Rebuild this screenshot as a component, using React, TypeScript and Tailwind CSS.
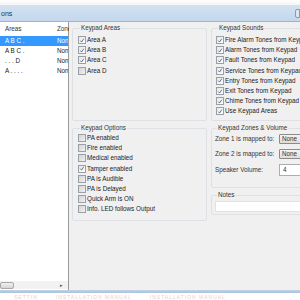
const Check = () => (
    <svg viewBox="0 0 7 7" className="w-[7px] h-[7px]">
        <path d="M1.5 3.6 L3 5.3 L5.6 1.4" fill="none" stroke="#3c4f78" strokeWidth="0.9" />
    </svg>
);

const Box = ({ checked }: { checked: boolean }) => (
    <div
        className={
            'w-[8px] h-[8px] shrink-0 border border-[#9aa0a6] flex items-center justify-center ' +
            (checked ? 'bg-gradient-to-br from-[#e6e6e6] to-white' : 'bg-gradient-to-br from-[#d4d4d4] to-[#f0f0f0]')
        }
    >
        {checked && <Check />}
    </div>
);

const Row = ({ label, checked = false }: { label: string; checked?: boolean }) => (
    <div className="h-[10.2px] flex items-center gap-[1px] whitespace-nowrap">
        <Box checked={checked} />
        <span className="text-[#222]">{label}</span>
    </div>
);

const Group = ({ title, children, className = '' }: { title: string; children: React.ReactNode; className?: string }) => (
    <fieldset className={'border border-[#dde1e5] rounded-[2px] ' + className}>
        <legend className="ml-[2px] px-[1px] leading-[8px] text-[#333]">{title}</legend>
        {children}
    </fieldset>
);

const areas = [
    { name: 'A B C .', sel: true },
    { name: 'A B C .', sel: false },
    { name: '. . . D', sel: false },
    { name: 'A . . . .', sel: false },
];

export default function App() {
    return (
        <div className="w-[300px] h-[300px] overflow-hidden bg-white flex flex-col font-['Liberation_Sans',Arial,sans-serif] text-[6.3px] leading-none">
            {/* faint strip above the window */}
            <div className="h-[5px] bg-gradient-to-b from-white to-[#f4f4f4]" />

            {/* title bar */}
            <div className="h-[16px] bg-gradient-to-b from-[#d3e2f2] to-[#c4d7ec] flex items-center justify-between pl-[1px]">
                <span className="text-[7px] text-[#1e3250]">ons</span>
                <div className="w-[5px] h-[9px] rounded-l-[2px] border border-[#8a9bb0] bg-[#dde6f0]" />
            </div>

            {/* body */}
            <div className="flex-1 flex min-h-0 border-t border-[#9fb4cc]">
                {/* list */}
                <div className="w-[69px] bg-white border-r border-[#9a9a9a] flex flex-col">
                    <div className="h-[14px] grid grid-cols-[57px_1fr] items-center pl-[5px] text-[#333]">
                        <span>Areas</span>
                        <span className="-ml-[5px]">Zone</span>
                    </div>
                    {areas.map((a, i) => (
                        <div
                            key={i}
                            className={
                                'h-[10px] grid grid-cols-[57px_1fr] items-center pl-[5px] whitespace-nowrap overflow-hidden ' +
                                (a.sel ? 'bg-[#3399ff] text-white' : 'text-[#222]')
                            }
                        >
                            <span>{a.name}</span>
                            <span className="-ml-[5px]">None</span>
                        </div>
                    ))}
                    <div className="flex-1" />
                    <div className="h-[8px] mb-[1px] bg-[#f2f2f2] flex items-center justify-between">
                        <div className="w-[14px] h-[7px] rounded-[2px] border border-[#a8a8a8] bg-gradient-to-b from-[#f0f0f0] to-[#d6d6d6]" />
                        <span className="text-[5px] text-[#555] pr-[5px]">▸</span>
                    </div>
                </div>

                {/* settings */}
                <div className="flex-1 bg-[#f0f0f0] pl-[3px] pt-[2px] overflow-hidden">
                    <div className="grid grid-cols-[135px_100px] gap-x-[4px]">
                        <div className="flex flex-col gap-[3px]">
                            <Group title="Keypad Areas" className="h-[97px] pl-[5px] pt-[3px]">
                                <Row label="Area A" checked />
                                <Row label="Area B" checked />
                                <Row label="Area C" checked />
                                <Row label="Area D" />
                            </Group>
                            <Group title="Keypad Options" className="h-[97px] pl-[5px] pt-[1px]">
                                <Row label="PA enabled" />
                                <Row label="Fire enabled" />
                                <Row label="Medical enabled" />
                                <Row label="Tamper enabled" checked />
                                <Row label="PA is Audible" />
                                <Row label="PA is Delayed" />
                                <Row label="Quick Arm is ON" />
                                <Row label="Info. LED follows Output" />
                            </Group>
                        </div>

                        <div className="flex flex-col gap-[3px]">
                            <Group title="Keypad Sounds" className="h-[97px] pl-[4px] pt-[3px]">
                                <Row label="Fire Alarm Tones from Keypad" checked />
                                <Row label="Alarm Tones from Keypad" checked />
                                <Row label="Fault Tones from Keypad" checked />
                                <Row label="Service Tones from Keypad" checked />
                                <Row label="Entry Tones from Keypad" checked />
                                <Row label="Exit Tones from Keypad" checked />
                                <Row label="Chime Tones from Keypad" checked />
                                <Row label="Use Keypad Areas" checked />
                            </Group>
                            <Group title="Keypad Zones & Volume" className="h-[64px] pl-[3px] pt-[2px] text-[#333]">
                                <div className="grid grid-cols-[64px_1fr] items-center gap-y-[5px]">
                                    <span>Zone 1 is mapped to:</span>
                                    <div className="h-[10px] border border-[#8b8b8b] rounded-[1px] bg-gradient-to-b from-[#f4f4f4] to-[#dcdcdc] flex items-center pl-[2px]">None</div>
                                    <span>Zone 2 is mapped to:</span>
                                    <div className="h-[10px] border border-[#8b8b8b] rounded-[1px] bg-gradient-to-b from-[#f4f4f4] to-[#dcdcdc] flex items-center pl-[2px]">None</div>
                                    <span>Speaker Volume:</span>
                                    <div className="h-[12px] border border-[#abadb3] bg-white flex items-center pl-[3px]">4</div>
                                </div>
                            </Group>
                            <Group title="Notes" className="h-[24px] pl-[3px] pt-[2px]">
                                <div className="h-[11px] bg-white border border-[#e2e2e2]" />
                            </Group>
                        </div>
                    </div>
                </div>
            </div>

            {/* window frame bottom */}
            <div className="h-[3px] bg-gradient-to-b from-[#c2d4e6] to-[#a9c1da]" />
            <div className="h-[7px] overflow-hidden flex items-center gap-[18px] pl-[14px] text-[5px] leading-[6px] text-[#f2caca] tracking-[1px]">
                <span>SETTIN</span>
                <span>INSTALLATION MANUAL</span>
                <span>INSTALLATION MANUAL</span>
            </div>
        </div>
    );
}
